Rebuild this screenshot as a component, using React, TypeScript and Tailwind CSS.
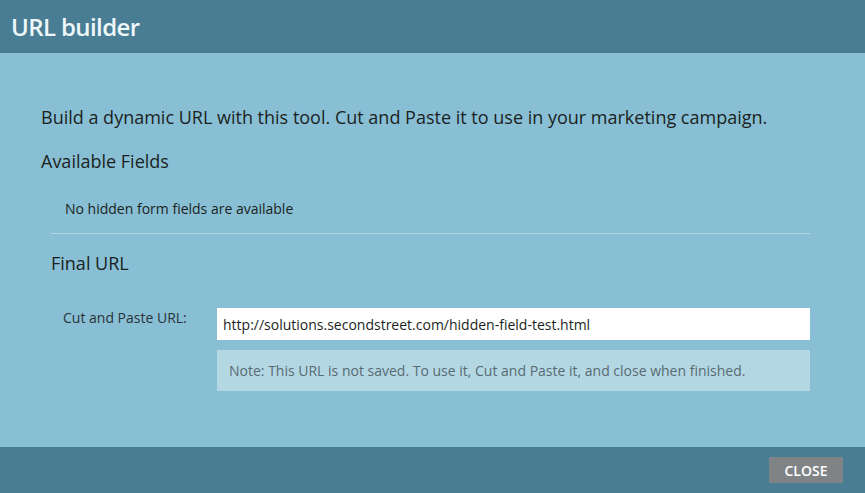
export default function App() {
  return (
    <div className="flex h-[493px] w-[865px] flex-col bg-[#88bfd4] font-['Open_Sans',sans-serif] text-[#1b1f22]">
      <header className="flex h-[53px] shrink-0 items-center bg-[#497d93] pl-[11px]">
        <h1 className="text-[24px] font-semibold leading-none tracking-[-0.6px] text-[#eef7fa]">URL builder</h1>
      </header>

      <main className="flex-1 pl-[41px] pr-[55px] pt-[52px]">
        <p className="text-[18px] leading-[24px]">
          Build a dynamic URL with this tool. Cut and Paste it to use in your marketing campaign.
        </p>
        <h2 className="mt-[20px] text-[18px] leading-[24px]">Available Fields</h2>
        <p className="mt-[26px] pl-[24px] text-[14px] leading-[20px]">No hidden form fields are available</p>

        <div className="ml-[10px] mt-[14px] border-t border-[#b3d6e3] pt-[17px]">
          <h2 className="text-[18px] leading-[24px]">Final URL</h2>
          <div className="mt-[33px] flex">
            <label className="w-[166px] pl-[12px] text-[14px] leading-[20px] text-[#2b3338]">
              Cut and Paste URL:
            </label>
            <div className="flex flex-1 flex-col gap-[10px]">
              <div className="flex h-[32px] items-center bg-white px-[6px] text-[14px] text-[#1b1f22]">
                http://solutions.secondstreet.com/hidden-field-test.html
              </div>
              <div className="flex h-[41px] items-center bg-[#b3d8e4] px-[12px] text-[14px] text-[#5a6a72]">
                Note: This URL is not saved. To use it, Cut and Paste it, and close when finished.
              </div>
            </div>
          </div>
        </div>
      </main>

      <footer className="flex h-[46px] shrink-0 items-center justify-end bg-[#497d93] pr-[22px]">
        <button className="h-[26px] w-[74px] bg-[#7f8386] text-[14px] font-semibold text-white">CLOSE</button>
      </footer>
    </div>
  );
}
